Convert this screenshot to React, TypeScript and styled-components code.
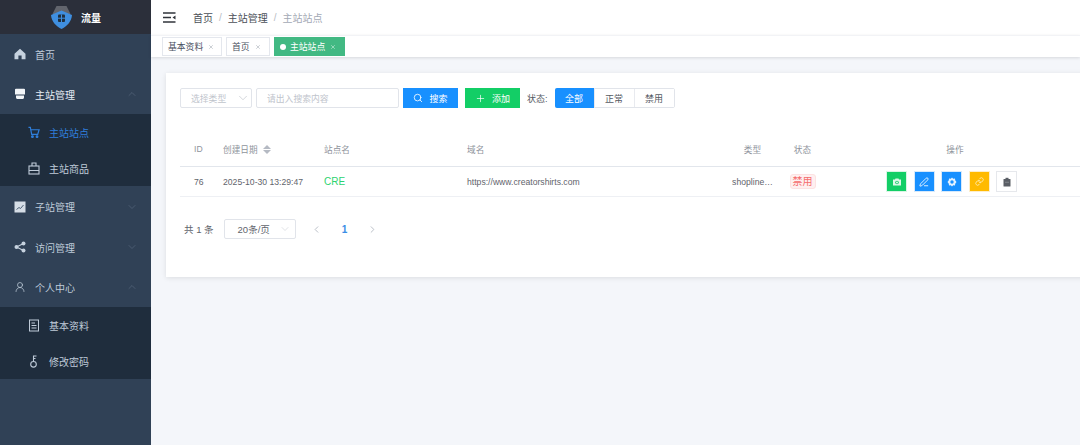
import styled, { createGlobalStyle } from "styled-components";
import { ChevronDown, ChevronUp, ChevronLeft, ChevronRight, UserRound, Search, Plus, PenLine, Link, X } from "lucide-react";

const GlobalStyle = createGlobalStyle`
  html, body { margin: 0; padding: 0; height: 100%; }
  body { font-family: "Liberation Sans", "Noto Sans CJK SC", sans-serif; background: #f4f6fa; overflow: hidden; }
  #root { height: 100%; }
`;

const Page = styled.div`
  display: flex;
  width: 1080px;
  height: 445px;
  overflow: hidden;
`;

const Side = styled.aside`
  width: 151px;
  flex: none;
  background: #304156;
  display: flex;
  flex-direction: column;
`;

const Brand = styled.div`
  height: 34px;
  background: #2b2f3a;
  display: flex;
  align-items: center;
  padding-left: 51px;
  gap: 9px;
  color: #fff;
  font-size: 10px;
  font-weight: 700;
`;

const MenuItem = styled.div<{ $open?: boolean; $tall?: boolean }>`
  height: ${({ $tall }) => ($tall ? "41px" : "40px")};
  display: flex;
  align-items: center;
  padding-left: 14px;
  padding-right: 13px;
  gap: 9px;
  color: ${({ $open }) => ($open ? "#e6edf5" : "#bfcbd9")};
  font-size: 10px;
  svg.tail { margin-left: auto; color: #64748a; }
`;

const IconSlot = styled.span`
  width: 12px;
  height: 12px;
  display: flex;
  align-items: center;
  justify-content: center;
  color: #c6d2df;
`;

const SubMenu = styled.div`
  background: #1f2d3d;
  display: flex;
  flex-direction: column;
`;

const SubItem = styled.div<{ $active?: boolean }>`
  height: 36px;
  display: flex;
  align-items: center;
  padding-left: 28px;
  gap: 9px;
  font-size: 10px;
  color: ${({ $active }) => ($active ? "#2f7fdc" : "#bfcbd9")};
  span { color: ${({ $active }) => ($active ? "#2f7fdc" : "#bfcbd9")}; }
`;

const Main = styled.main`
  flex: 1;
  min-width: 0;
  display: flex;
  flex-direction: column;
`;

const TopBar = styled.div`
  height: 35px;
  flex: none;
  background: #fff;
  display: flex;
  align-items: center;
  padding-left: 12px;
  font-size: 10px;
`;

const Crumbs = styled.div`
  display: flex;
  align-items: center;
  margin-left: 17px;
  gap: 6px;
  color: #4b4f57;
`;

const Sep = styled.span`
  color: #b9bdc5;
`;

const CrumbLast = styled.span`
  color: #a3a9b5;
`;

const TabBar = styled.div`
  height: 22px;
  flex: none;
  background: #fff;
  border-top: 1px solid #f2f3f6;
  box-shadow: 0 1px 3px rgba(0, 0, 0, 0.12);
  display: flex;
  align-items: center;
  padding-left: 11px;
  gap: 4px;
  box-sizing: border-box;
`;

const Tab = styled.div<{ $active?: boolean; $w: number }>`
  width: ${({ $w }) => $w}px;
  height: 19px;
  box-sizing: border-box;
  display: flex;
  align-items: center;
  gap: 4px;
  padding: 0 5px;
  font-size: 8.8px;
  border: 1px solid ${({ $active }) => ($active ? "#42b983" : "#e4e7ed")};
  background: ${({ $active }) => ($active ? "#42b983" : "#fff")};
  color: ${({ $active }) => ($active ? "#fff" : "#495060")};
  svg { color: ${({ $active }) => ($active ? "#e8f8f0" : "#99a0ab")}; margin-left: 1px; }
`;

const Dot = styled.i`
  width: 6px;
  height: 6px;
  border-radius: 50%;
  background: #fff;
`;

const Content = styled.div`
  flex: 1;
  padding: 16px 0 0 15px;
`;

const Card = styled.section`
  width: 960px;
  height: 204px;
  background: #fff;
  box-sizing: border-box;
  padding: 15px 0 0 14px;
  box-shadow: 0 1px 5px rgba(0, 0, 0, 0.1);
`;

const Filters = styled.div`
  display: flex;
  align-items: center;
  height: 20px;
  font-size: 9px;
`;

const Field = styled.div<{ $w: number; $mr: number }>`
  width: ${({ $w }) => $w}px;
  margin-right: ${({ $mr }) => $mr}px;
  height: 20px;
  box-sizing: border-box;
  border: 1px solid #e1e4ea;
  border-radius: 2px;
  display: flex;
  align-items: center;
  padding: 0 1px 0 10px;
  font-size: 8.8px;
  color: #c0c4cc;
  svg { margin-left: auto; color: #b5bac3; }
`;

const Btn = styled.button<{ $bg: string; $w: number; $mr: number }>`
  width: ${({ $w }) => $w}px;
  margin-right: ${({ $mr }) => $mr}px;
  height: 20px;
  border: 0;
  padding: 0;
  background: ${({ $bg }) => $bg};
  color: #fff;
  font: inherit;
  display: flex;
  align-items: center;
  justify-content: center;
  gap: 6px;
`;

const StateLabel = styled.span`
  color: #555a63;
  margin-right: 7px;
`;

const Radio = styled.div`
  display: flex;
  height: 20px;
  width: 120px;
  box-sizing: border-box;
  border: 1px solid #e1e4ea;
  border-radius: 2px;
`;

const RadioItem = styled.div<{ $on?: boolean }>`
  flex: 1;
  margin: ${({ $on }) => ($on ? "-1px 0 -1px -1px" : "0")};
  display: flex;
  align-items: center;
  justify-content: center;
  border-right: 1px solid #e8eaef;
  border-radius: ${({ $on }) => ($on ? "2px 0 0 2px" : "0")};
  background: ${({ $on }) => ($on ? "#1890ff" : "#fff")};
  color: ${({ $on }) => ($on ? "#fff" : "#555a63")};
  &:last-child { border-right: 0; }
`;

const Row = styled.div<{ $head?: boolean }>`
  display: grid;
  grid-template-columns: 33px 101px 143px 268px 55px 45px 260px;
  align-items: center;
  font-size: 8.65px;
  height: ${({ $head }) => ($head ? "35px" : "30px")};
  margin-top: ${({ $head }) => ($head ? "24px" : "0")};
  border-bottom: 1px solid ${({ $head }) => ($head ? "#e2e6ec" : "#eef0f4")};
  box-sizing: border-box;
  color: ${({ $head }) => ($head ? "#8f949c" : "#5f646c")};
`;

const Cell = styled.div<{ $center?: boolean; $pl?: number }>`
  padding-left: ${({ $pl }) => $pl ?? 10}px;
  text-align: ${({ $center }) => ($center ? "center" : "left")};
  white-space: nowrap;
  display: ${({ $center }) => ($center ? "block" : "flex")};
  align-items: center;
  gap: 5px;
`;

const CenterCell = styled(Cell)`
  padding-left: 0;
`;

const SiteName = styled.span`
  color: #2dd36f;
  font-size: 10px;
`;

const Sort = styled.span`
  display: inline-flex;
  flex-direction: column;
  gap: 1px;
  &::before, &::after {
    content: "";
    border-left: 4px solid transparent;
    border-right: 4px solid transparent;
  }
  &::before { border-bottom: 4px solid #b5bac3; }
  &::after { border-top: 4px solid #b5bac3; }
`;

const Badge = styled.span`
  display: inline-block;
  padding: 0 2px;
  line-height: 13px;
  font-size: 10px;
  color: #f56c6c;
  background: #fef0f0;
  border: 1px solid #fde2e2;
  border-radius: 3px;
`;

const Actions = styled.div`
  display: flex;
  padding-left: 61px;
  gap: 6.5px;
`;

const ActionBtn = styled.span<{ $bg: string; $edge: string }>`
  width: 21px;
  height: 21px;
  box-sizing: border-box;
  display: flex;
  align-items: center;
  justify-content: center;
  background: ${({ $bg }) => $bg};
  color: #fff;
  border: 1px solid ${({ $edge }) => $edge};
`;

const Pager = styled.div`
  display: flex;
  align-items: center;
  font-size: 9.5px;
  color: #5f646c;
  height: 20px;
  margin-top: 22px;
  padding-left: 4px;
`;

const PageSize = styled.div`
  width: 72px;
  height: 20px;
  margin-left: 10px;
  margin-right: 15px;
  box-sizing: border-box;
  border: 1px solid #e1e4ea;
  border-radius: 2px;
  display: flex;
  align-items: center;
  padding: 0 4px 0 13px;
  svg { margin-left: auto; color: #c0c4cc; }
`;

const PageNav = styled.span`
  width: 12px;
  display: flex;
  justify-content: center;
  color: #b5bac3;
`;

const PageNum = styled.b`
  width: 44px;
  text-align: center;
  color: #3a8ee6;
  font-size: 10px;
`;

const Logo = () => (
  <svg width="21" height="23" viewBox="0 0 21 23">
    <path d="M1.500 8 5.500 0H15.500L19.500 8Z" fill="#62656d" />
    <path d="M0 9 10.500 4.500 21 9C20.500 16 15.500 20.500 10.500 23 5.500 20.500 .5 16 0 9Z" fill="#3f8fe0" />
    <rect x="7" y="8.500" width="7" height="7.500" rx="1" fill="#20303f" />
    <path d="M10.500 8.500V16M7 12.200H14" stroke="#3f8fe0" strokeWidth="1" />
  </svg>
);

const HomeIcon = () => (
  <svg width="12" height="12" viewBox="0 0 12 12">
    <path d="M6 .8 11.500 5.800V11.200H7.600V7.600H4.400V11.200H.5V5.800Z" fill="currentColor" />
  </svg>
);

const StoreIcon = () => (
  <svg width="12" height="12" viewBox="0 0 12 12">
    <path d="M1 1.500C1 1 1.400.8 2 .8H10C10.600.8 11 1 11 1.500V6.500H1Z M2 7.500H10V9.500C10 10.500 9 11 8 11H4C3 11 2 10.500 2 9.500Z" fill="#f2f5f8" />
  </svg>
);

const CartIcon = () => (
  <svg width="13" height="13" viewBox="0 0 13 13" fill="none" stroke="#2f7fdc" strokeWidth="1.300">
    <path d="M.5 1H2.500L4 8.500H10.500L12 3.500H3" />
    <circle cx="4.800" cy="11" r=".9" fill="#2f7fdc" />
    <circle cx="9.800" cy="11" r=".9" fill="#2f7fdc" />
  </svg>
);

const BagIcon = () => (
  <svg width="12" height="13" viewBox="0 0 12 13" fill="none" stroke="currentColor" strokeWidth="1.100">
    <rect x="1" y="4" width="10" height="8" />
    <path d="M4 4V1H8V4M1 8.500H11" />
  </svg>
);

const ChartIcon = () => (
  <svg width="12" height="12" viewBox="0 0 12 12">
    <rect x=".5" y=".5" width="11" height="11" fill="#d5dde6" />
    <path d="M2.500 8.500 5 6.500 6.500 7.500 9.500 4" stroke="#4d6075" strokeWidth="1" fill="none" />
  </svg>
);

const ShareIcon = () => (
  <svg width="12" height="12" viewBox="0 0 12 12" fill="currentColor">
    <circle cx="2.500" cy="6" r="2" />
    <circle cx="9.500" cy="2.500" r="2" />
    <circle cx="9.500" cy="9.500" r="2" />
    <path d="M2.500 6 9.500 2.500M2.500 6 9.500 9.500" stroke="currentColor" strokeWidth="1.200" />
  </svg>
);

const DocIcon = () => (
  <svg width="12" height="13" viewBox="0 0 12 13" fill="none" stroke="currentColor" strokeWidth="1">
    <rect x="1.500" y="1" width="9" height="11" />
    <path d="M3.500 4H7M3.500 6.500H8.500M3.500 9H8.500" />
  </svg>
);

const KeyIcon = () => (
  <svg width="12" height="13" viewBox="0 0 12 13" fill="none" stroke="currentColor" strokeWidth="1.100">
    <circle cx="5.500" cy="9.300" r="2.800" />
    <path d="M5.500 6.500V1H8.500M5.500 3.500H7.500" />
  </svg>
);

const MenuToggle = () => (
  <svg width="13" height="11" viewBox="0 0 13 11">
    <path d="M0 1H12.500M0 5.500H8M0 10H12.500" stroke="#30343b" strokeWidth="1.400" />
    <path d="M12.500 3.500 9.500 5.500 12.500 7.500Z" fill="#30343b" />
  </svg>
);

const CameraIcon = () => (
  <svg width="10" height="10" viewBox="0 0 10 10">
    <path d="M1 2.500H3L3.500 1.500H6.500L7 2.500H9V8.500H1Z" fill="#dff7e8" />
    <circle cx="5" cy="5.500" r="1.800" fill="#13ce66" />
    <circle cx="5" cy="5.500" r="1" fill="#dff7e8" />
  </svg>
);

const CogIcon = () => (
  <svg width="10" height="10" viewBox="0 0 10 10">
    <path d="M5 .5 6.200 1.700 8 1.500 8.200 3.300 9.500 5 8.200 6.700 8 8.500 6.200 8.300 5 9.500 3.800 8.300 2 8.500 1.800 6.700.5 5 1.800 3.300 2 1.500 3.800 1.700Z" fill="#e3f1ff" />
    <circle cx="5" cy="5" r="1.700" fill="#1890ff" />
  </svg>
);

const TrashIcon = () => (
  <svg width="10" height="10" viewBox="0 0 10 10">
    <rect x="1.500" y="2" width="7" height="7.500" rx=".5" fill="#5a5e65" />
    <rect x="3.500" y=".8" width="3" height="2" fill="#5a5e65" />
    <rect x="3" y="4.800" width="4" height=".8" fill="#8d9096" />
  </svg>
);

export default function App() {
  return (
    <Page>
      <GlobalStyle />
      <Side>
        <Brand><Logo />流量</Brand>
        <MenuItem><IconSlot><HomeIcon /></IconSlot>首页</MenuItem>
        <MenuItem $open><IconSlot><StoreIcon /></IconSlot>主站管理<ChevronUp className="tail" size={12} strokeWidth={1} /></MenuItem>
        <SubMenu>
          <SubItem $active><IconSlot><CartIcon /></IconSlot><span>主站站点</span></SubItem>
          <SubItem><IconSlot><BagIcon /></IconSlot><span>主站商品</span></SubItem>
        </SubMenu>
        <MenuItem $tall><IconSlot><ChartIcon /></IconSlot>子站管理<ChevronDown className="tail" size={12} strokeWidth={1} /></MenuItem>
        <MenuItem><IconSlot><ShareIcon /></IconSlot>访问管理<ChevronDown className="tail" size={12} strokeWidth={1} /></MenuItem>
        <MenuItem><IconSlot><UserRound size={14} strokeWidth={1.400} /></IconSlot>个人中心<ChevronUp className="tail" size={12} strokeWidth={1} /></MenuItem>
        <SubMenu>
          <SubItem><IconSlot><DocIcon /></IconSlot><span>基本资料</span></SubItem>
          <SubItem><IconSlot><KeyIcon /></IconSlot><span>修改密码</span></SubItem>
        </SubMenu>
      </Side>
      <Main>
        <TopBar>
          <MenuToggle />
          <Crumbs>
            <span>首页</span><Sep>/</Sep><span>主站管理</span><Sep>/</Sep><CrumbLast>主站站点</CrumbLast>
          </Crumbs>
        </TopBar>
        <TabBar>
          <Tab $w={60}>基本资料<X size={6} /></Tab>
          <Tab $w={44}>首页<X size={6} /></Tab>
          <Tab $w={71} $active><Dot />主站站点<X size={6} /></Tab>
        </TabBar>
        <Content>
          <Card>
            <Filters>
              <Field $w={72} $mr={4}>选择类型<ChevronDown size={14} strokeWidth={1} /></Field>
              <Field $w={143} $mr={4}>请出入搜索内容</Field>
              <Btn $bg="#1890ff" $w={55} $mr={7}><Search size={10} />搜索</Btn>
              <Btn $bg="#13ce66" $w={55} $mr={7}><Plus size={11} strokeWidth={1.500} />添加</Btn>
              <StateLabel>状态:</StateLabel>
              <Radio>
                <RadioItem $on>全部</RadioItem>
                <RadioItem>正常</RadioItem>
                <RadioItem>禁用</RadioItem>
              </Radio>
            </Filters>
            <Row $head>
              <Cell $pl={14}>ID</Cell>
              <Cell>创建日期<Sort /></Cell>
              <Cell>站点名</Cell>
              <Cell>域名</Cell>
              <CenterCell $center>类型</CenterCell>
              <CenterCell $center>状态</CenterCell>
              <CenterCell $center>操作</CenterCell>
            </Row>
            <Row>
              <Cell $pl={14}>76</Cell>
              <Cell>2025-10-30 13:29:47</Cell>
              <Cell><SiteName>CRE</SiteName></Cell>
              <Cell>https://www.creatorshirts.com</Cell>
              <CenterCell $center>shopline…</CenterCell>
              <CenterCell $center><Badge>禁用</Badge></CenterCell>
              <Actions>
                <ActionBtn $bg="#13ce66" $edge="#d9f5e5"><CameraIcon /></ActionBtn>
                <ActionBtn $bg="#1890ff" $edge="#d6e9fb"><PenLine size={10} /></ActionBtn>
                <ActionBtn $bg="#1890ff" $edge="#d6e9fb"><CogIcon /></ActionBtn>
                <ActionBtn $bg="#ffba00" $edge="#fdeecb"><Link size={9} color="#ffe9a8" strokeWidth={2.500} /></ActionBtn>
                <ActionBtn $bg="#fff" $edge="#e6e8ec"><TrashIcon /></ActionBtn>
              </Actions>
            </Row>
            <Pager>
              共 1 条
              <PageSize>20条/页<ChevronDown size={12} strokeWidth={1} /></PageSize>
              <PageNav><ChevronLeft size={11} /></PageNav>
              <PageNum>1</PageNum>
              <PageNav><ChevronRight size={11} /></PageNav>
            </Pager>
          </Card>
        </Content>
      </Main>
    </Page>
  );
}
